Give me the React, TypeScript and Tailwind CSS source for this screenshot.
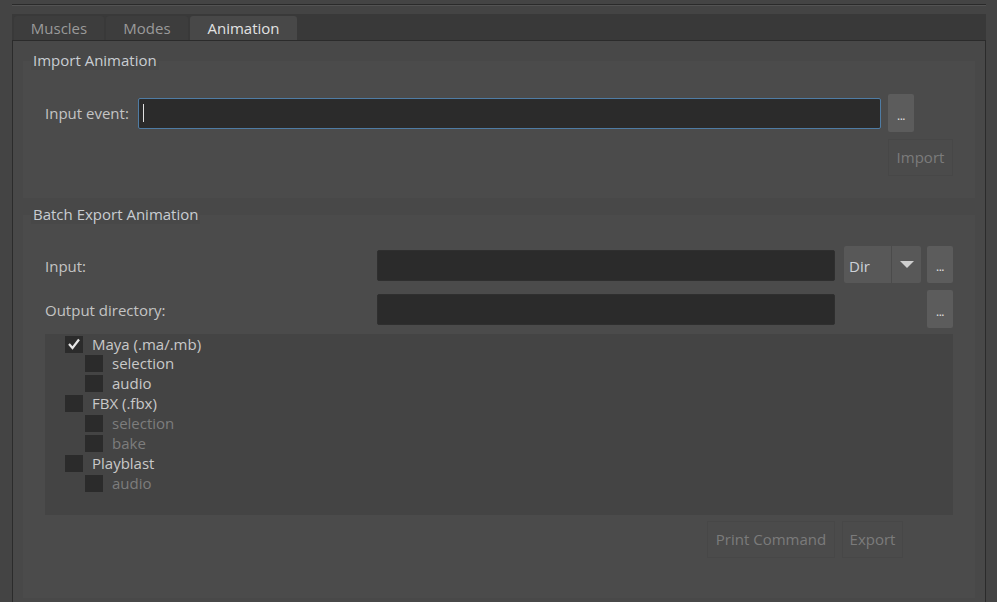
import React from 'react'

const font = { fontFamily: '"Open Sans", "Noto Sans", sans-serif' }

function Tab({ label, active }: { label: string; active?: boolean }) {
  return (
    <div
      className={
        active
          ? 'h-[24px] w-[107px] rounded-t-[3px] bg-[#484848] text-[#e2e2e2] flex items-center justify-center'
          : 'h-[24px] rounded-t-[3px] bg-[#3d3d3d] text-[#9a9a9a] flex items-center justify-center'
      }
      style={active ? undefined : { width: label === 'Muscles' ? 90 : 82 }}
    >
      <span className="text-[15px] leading-none">{label}</span>
    </div>
  )
}

function Group({ title, children }: { title: string; children: React.ReactNode }) {
  return (
    <div className="flex flex-col">
      <div className="relative z-10 self-start ml-[8px] -mb-[9px] h-[18px] px-[2px] bg-[#484848] text-[#c9cdd2] text-[15px] leading-[16px]">
        {title}
      </div>
      <div className="bg-[#4b4b4b]">{children}</div>
    </div>
  )
}

function Dots({ className }: { className: string }) {
  return (
    <div className={'bg-[#5c5c5c] rounded-[2px] flex items-end justify-center pb-[10px] ' + className}>
      <span className="text-[#e0e0e0] text-[12px] leading-none tracking-[-0.5px]">...</span>
    </div>
  )
}

function DisabledButton({ label, w }: { label: string; w: string }) {
  return (
    <div className={'h-[37px] border border-[#474747] bg-[#4b4b4b] flex items-center justify-center text-[15px] text-[#7b7b7b] ' + w}>
      {label}
    </div>
  )
}

function Check({ label, checked, indent, disabled, short }: { label: string; checked?: boolean; indent?: boolean; disabled?: boolean; short?: boolean }) {
  return (
    <div className={(short ? 'h-[18px] ' : 'h-[20px] ') + 'flex items-center ' + (indent ? 'pl-[40px]' : 'pl-[20px]')}>
      <div className="w-[18px] h-[17px] bg-[#2b2b2b] flex items-center justify-center">
        {checked && (
          <svg width="14" height="12" viewBox="0 0 14 12">
            <polyline points="2,6 5.5,10 12,1.5" fill="none" stroke="#e6e6e6" strokeWidth="2.2" />
          </svg>
        )}
      </div>
      <span className={'ml-[9px] text-[15px] leading-none ' + (disabled ? 'text-[#7d7d7d]' : 'text-[#c9c9c9]')}>{label}</span>
    </div>
  )
}

export default function App() {
  return (
    <div className="w-[997px] h-[602px] bg-[#444444] overflow-hidden flex flex-col" style={font}>
      <div className="h-[4px]" />
      <div className="ml-[12px] mr-[11px] h-[2px] border-t border-[#2a2a2a] bg-[#535353]" />
      <div className="h-[8px]" />
      <div className="ml-[12px] mr-[11px] flex-1 flex flex-col">
        <div className="h-[26px] bg-[#393939] flex items-end gap-[2px] pl-[2px]">
          <Tab label="Muscles" />
          <Tab label="Modes" />
          <Tab label="Animation" active />
        </div>
        <div className="flex-1 border-t border-l border-r border-[#2b2b2b] bg-[#484848] px-[10px] pt-[11px] flex flex-col gap-[8px]">
          <Group title="Import Animation">
            <div className="pt-[33px] pb-[22px] pl-[22px] flex flex-col gap-[7px]">
              <div className="flex items-center h-[38px]">
                <span className="w-[93px] text-[15px] text-[#c4c4c4]">Input event:</span>
                <div className="w-[743px] h-[31px] rounded-[2px] border border-[#4f7ca4] bg-[#2b2b2b] flex items-center pl-[4px]">
                  <div className="w-[1px] h-[18px] bg-[#e0e0e0]" />
                </div>
                <Dots className="ml-[7px] w-[26px] h-[38px]" />
              </div>
              <div className="flex">
                <div className="ml-[843px]">
                  <DisabledButton label="Import" w="w-[65px]" />
                </div>
              </div>
            </div>
          </Group>
          <Group title="Batch Export Animation">
            <div className="pt-[31px] pl-[22px] pb-[40px] flex flex-col">
              <div className="flex items-center h-[37px]">
                <span className="w-[332px] mt-[4px] text-[15px] text-[#c4c4c4]">Input:</span>
                <div className="w-[458px] h-[31px] mt-[2px] rounded-[2px] border border-[#2f2f2f] bg-[#2b2b2b]" />
                <div className="ml-[9px] w-[77px] h-[37px] rounded-[2px] bg-[#585858] flex">
                  <div className="w-[47px] flex items-center pl-[5px] pt-[3px] text-[15px] text-[#cdd2d8]">Dir</div>
                  <div className="w-[1px] bg-[#4b4b4b]" />
                  <div className="flex-1 flex items-center justify-center">
                    <svg width="14" height="8" viewBox="0 0 14 8">
                      <polygon points="0,0 14,0 7,7" fill="#cfcfcf" />
                    </svg>
                  </div>
                </div>
                <Dots className="ml-[6px] w-[26px] h-[37px]" />
              </div>
              <div className="flex items-center h-[38px] mt-[7px]">
                <span className="w-[332px] mt-[2px] text-[15px] text-[#c4c4c4]">Output directory:</span>
                <div className="w-[458px] h-[31px] rounded-[2px] border border-[#2f2f2f] bg-[#2b2b2b]" />
                <Dots className="ml-[92px] w-[26px] h-[38px]" />
              </div>
              <div className="mt-[6px] w-[908px] h-[181px] bg-[#444444] pt-[1px]">
                <Check label="Maya (.ma/.mb)" checked short />
                <Check label="selection" indent />
                <Check label="audio" indent />
                <Check label="FBX (.fbx)" />
                <Check label="selection" indent disabled />
                <Check label="bake" indent disabled />
                <Check label="Playblast" />
                <Check label="audio" indent disabled />
              </div>
              <div className="mt-[6px] flex gap-[7px] pl-[662px]">
                <DisabledButton label="Print Command" w="w-[128px]" />
                <DisabledButton label="Export" w="w-[61px]" />
              </div>
            </div>
          </Group>
        </div>
      </div>
    </div>
  )
}
